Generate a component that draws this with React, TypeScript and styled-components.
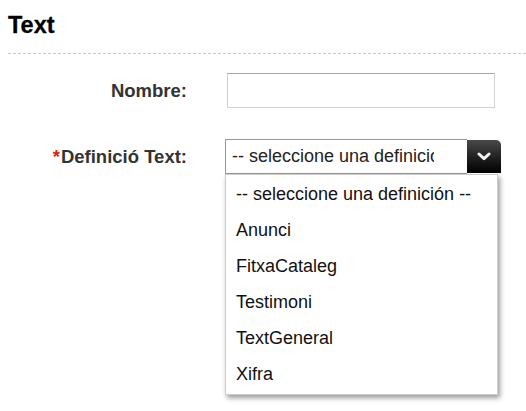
import React from 'react';
import styled, { createGlobalStyle } from 'styled-components';

const GlobalStyle = createGlobalStyle`
    html, body {
        margin: 0;
        padding: 0;
        background: #fff;
    }
    body {
        font-family: 'Liberation Sans', Arial, sans-serif;
    }
`;

const Page = styled.div`
    padding: 0 0 0 8px;
    width: 518px;
    height: 411px;
    overflow: hidden;
`;

const Title = styled.h2`
    margin: 0;
    padding-top: 12px;
    font-size: 23.5px;
    font-weight: bold;
    color: #000;
    line-height: 27px;
    border-bottom: 1px dashed #c8c8c8;
    box-sizing: border-box;
    height: 54px;
    -webkit-text-stroke: 0.3px #000;
`;

const Form = styled.div`
    display: grid;
    grid-template-columns: 179px 1fr;
    column-gap: 38px;
    row-gap: 31px;
    padding-top: 19px;
    align-items: center;
`;

const Label = styled.label`
    text-align: right;
    font-size: 18.5px;
    font-weight: bold;
    color: #333;
`;

const Required = styled.span`
    color: #e0201b;
    margin-right: 1px;
`;

const TextInput = styled.input`
    box-sizing: border-box;
    margin-left: 2px;
    width: 268px;
    height: 35px;
    border: 1px solid #d4d4d4;
    border-top-color: #a6a6a6;
    border-left-color: #cfcfcf;
    outline: none;
    font-family: inherit;
    font-size: 18px;
`;

const SelectWrap = styled.div`
    position: relative;
    width: 276px;
`;

const SelectBox = styled.div`
    display: flex;
    height: 35px;
    box-sizing: border-box;
`;

const SelectValue = styled.div`
    flex: 1;
    box-sizing: border-box;
    border: 1px solid #8f9aa3;
    border-right: none;
    padding: 0 0 0 6px;
    font-size: 18px;
    color: #222;
    line-height: 33px;
`;

const ValueText = styled.span`
    display: block;
    width: 202px;
    white-space: nowrap;
    overflow: hidden;
`;

const ArrowButton = styled.div`
    width: 34px;
    margin-top: 1px;
    height: 33px;
    border-top-right-radius: 5px;
    background: linear-gradient(#4a4a4a 0%, #262626 45%, #000 100%);
    display: flex;
    align-items: center;
    justify-content: center;
`;

const Menu = styled.ul`
    position: absolute;
    top: 35px;
    left: 0;
    width: 273px;
    box-sizing: border-box;
    margin: 0;
    padding: 1px 0 0;
    list-style: none;
    background: #fff;
    border: 1px solid #cdcdcd;
    box-shadow: 2px 3px 5px rgba(0, 0, 0, 0.4);
    height: 221px;
`;

const MenuItem = styled.li`
    height: 36px;
    line-height: 36px;
    padding-left: 10px;
    font-size: 18px;
    color: #111;
`;

const options = [
    '-- seleccione una definición --',
    'Anunci',
    'FitxaCataleg',
    'Testimoni',
    'TextGeneral',
    'Xifra',
];

const Chevron: React.FC = () => (
    <svg width="14" height="9" viewBox="0 0 14 9">
        <path d="M2 2 L7 6.6 L12 2" fill="none" stroke="#f2f2f2" strokeWidth="3" strokeLinecap="round" strokeLinejoin="round" />
    </svg>
);

const App: React.FC = () => {
    return (
        <>
            <GlobalStyle />
            <Page>
                <Title>Text</Title>
                <Form>
                    <Label>Nombre:</Label>
                    <div>
                        <TextInput type="text" />
                    </div>

                    <Label>
                        <Required>*</Required>Definició Text:
                    </Label>
                    <SelectWrap>
                        <SelectBox>
                            <SelectValue>
                                <ValueText>-- seleccione una definició</ValueText>
                            </SelectValue>
                            <ArrowButton>
                                <Chevron />
                            </ArrowButton>
                        </SelectBox>
                        <Menu>
                            {options.map((o) => (
                                <MenuItem key={o}>{o}</MenuItem>
                            ))}
                        </Menu>
                    </SelectWrap>
                </Form>
            </Page>
        </>
    );
};

export default App;
